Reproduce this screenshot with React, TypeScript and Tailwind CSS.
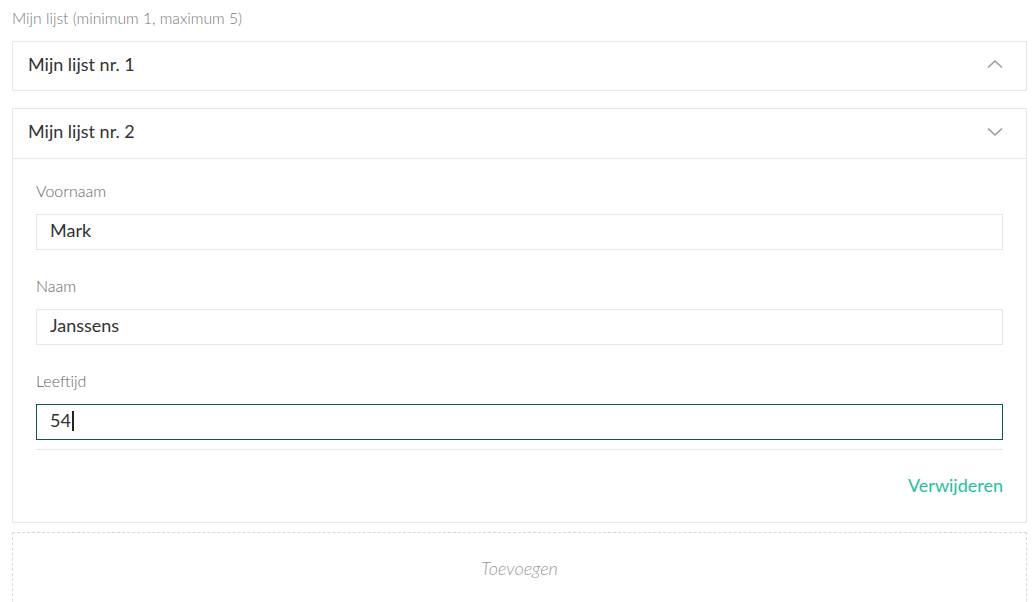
import React from "react";

function Chevron({ up }: { up?: boolean }) {
  return (
    <svg width="18" height="10" viewBox="0 0 18 10" className="text-[#999]">
      <path
        d={up ? "M2 8.5 L9 2 L16 8.5" : "M2 1.5 L9 8 L16 1.5"}
        fill="none"
        stroke="currentColor"
        strokeWidth="1.6"
      />
    </svg>
  );
}

function Field({ label, value, focused }: { label: string; value: string; focused?: boolean }) {
  return (
    <div className="flex flex-col">
      <label className="text-[16px] leading-[20px] text-[#666] font-light mb-[13px]">{label}</label>
      <div
        className={
          "h-[36px] flex items-center px-[13px] pb-[3px] text-[18px] text-[#333] bg-white " +
          (focused ? "border border-[#0b5a48]" : "border border-[#e6e6e6]")
        }
      >
        <span>{value}</span>
        {focused && <span className="w-[2px] h-[20px] bg-[#222] ml-[1px]" />}
      </div>
    </div>
  );
}

export default function App() {
  return (
    <div
      className="w-[1032px] h-[602px] overflow-hidden bg-white pl-[12px] pr-[5px] pt-[8px]"
      style={{ fontFamily: "Lato, 'Open Sans', sans-serif" }}
    >
      <div className="text-[15.7px] leading-[20px] text-[#7a7a7a] font-light mb-[13px]">
        Mijn lijst (minimum 1, maximum 5)
      </div>

      <div className="border border-[#e6e6e6] h-[50px] flex items-center justify-between pl-[15px] pr-[22px] pb-[4px]">
        <span className="text-[18px] text-[#333]">Mijn lijst nr. 1</span>
        <Chevron up />
      </div>

      <div className="border border-[#e6e6e6] mt-[17px]">
        <div className="h-[50px] flex items-center justify-between pl-[15px] pr-[22px] pb-[4px] border-b border-[#e6e6e6]">
          <span className="text-[18px] text-[#333]">Mijn lijst nr. 2</span>
          <Chevron />
        </div>
        <div className="px-[23px] pt-[22px] pb-[26px]">
          <div className="flex flex-col gap-[26px]">
            <Field label="Voornaam" value="Mark" />
            <Field label="Naam" value="Janssens" />
            <Field label="Leeftijd" value="54" focused />
          </div>
          <div className="border-b border-[#e6e6e6] mt-[9px]" />
          <div className="flex justify-end mt-[24px]">
            <span className="text-[18px] leading-[22px] text-[#1fbfa0]">Verwijderen</span>
          </div>
        </div>
      </div>

      <div className="border border-dashed border-[#d8d8d8] mt-[9px] h-[90px] flex justify-center pt-[22px]">
        <span className="italic font-light text-[18px] text-[#999]">Toevoegen</span>
      </div>
    </div>
  );
}
